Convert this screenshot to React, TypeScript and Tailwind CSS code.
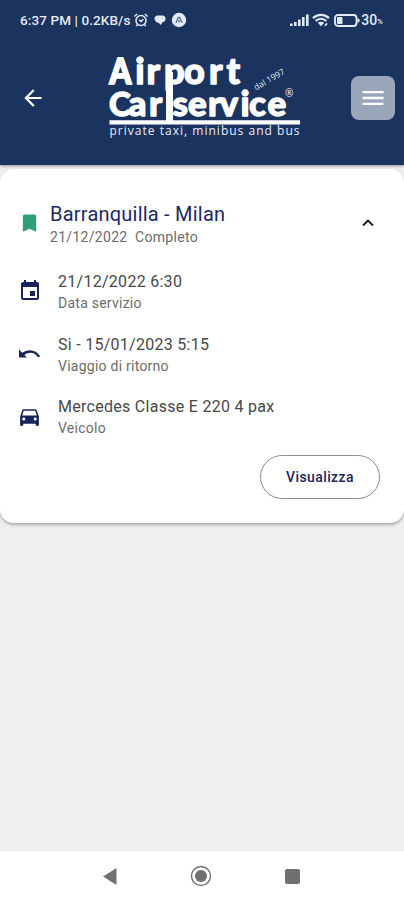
import type { ReactNode } from "react"
import { MdArrowBack, MdBookmark, MdDirectionsCar, MdEvent, MdMenu } from "react-icons/md"

interface DetailRowProps {
  icon: ReactNode
  value: string
  label: string
}

function AlarmIcon() {
  return (
    <svg viewBox="0 0 16 16" className="h-4 w-4" fill="none" stroke="currentColor" strokeWidth="1.5">
      <circle cx="8" cy="8.5" r="5" />
      <path d="M1.4 4.5 4.2 2M14.6 4.5 11.8 2M4.5 12.5l-1.3 1.6M11.5 12.5l1.3 1.6M6 8l2 1.6 2.3-2.3" />
    </svg>
  )
}

function StatusBar() {
  return (
    <div className="flex h-10 items-center pr-[21px] pl-5 text-[#e4eaf5]">
      <span className="w-[113px] text-[13.5px] font-medium tracking-[0.1px] whitespace-nowrap">6:37 PM | 0.2KB/s</span>
      <AlarmIcon />
      {/* chat bubble */}
      <svg viewBox="0 0 12 12" className="ml-[5px] h-3 w-3" fill="currentColor">
        <path d="M3.5 1.5h5A3 3 0 0 1 11.5 5c0 1.8-1.2 3-3 3.2L6.8 11 5.5 9.5C2.3 8.6.5 6.5.5 4.8.5 3 1.8 1.5 3.5 1.5Z" />
      </svg>
      <svg viewBox="0 0 16 16" className="ml-[5px] h-4 w-4">
        <circle cx="8" cy="8" r="7.2" fill="currentColor" />
        <path d="M5 10.8 7.3 5.5h1.4l2.3 5.3M8 8v2.8" fill="none" stroke="#5a6c93" strokeWidth="1.3" />
      </svg>
      <div className="ml-auto flex items-center">
        <svg viewBox="0 0 19 12" className="h-3 w-[19px]" fill="currentColor">
          <path d="M0 9.5h2.6V12H0zM4 8h2.6v4H4zM8 5.5h2.6V12H8zM12 3h2.6v9H12zM16 .5h2.6V12H16z" />
        </svg>
        <svg viewBox="0 0 18 14" className="ml-[3px] h-[14px] w-[18px]" fill="none" stroke="currentColor">
          <path d="M1 5.2C5.5.8 12.5.8 17 5.2" strokeWidth="2.4" />
          <path d="M3.7 8c3-3 7.6-3 10.6 0" strokeWidth="2.2" />
          <path d="m5.8 9.8 3.2 3.5 3.2-3.5c-2-1.5-4.4-1.5-6.4 0Z" fill="currentColor" stroke="none" />
          <path d="m12.8 12.8 2.4-2.4" strokeWidth="1.6" />
        </svg>
        <svg viewBox="0 0 27 13" className="ml-[4px] h-[13px] w-[27px]">
          <rect x="1" y="1" width="21.5" height="11" rx="3" fill="none" stroke="currentColor" strokeWidth="1.9" />
          <rect x="3" y="3" width="5.5" height="7" rx="1" fill="currentColor" />
          <path d="M23.5 3.500v6l2.700-3z" fill="currentColor" />
        </svg>
        <span className="text-[14px] font-medium">30</span>
        <span className="mt-[3px] text-[8px] font-medium">%</span>
      </div>
    </div>
  )
}

function Logo() {
  return (
    <svg viewBox="0 0 210 100" className="h-[100px] w-[210px]" fill="#fff" stroke="#fff">
      <g fontFamily="Lato, sans-serif" fontWeight="900" fontSize="36" strokeWidth="1.3" strokeLinejoin="round">
        <text transform="translate(9.5 39) scale(.86 1)" strokeWidth="2">A</text>
        <text x="35.200 46.500 64 84 109 126.500" y="39">irport</text>
        <text y="70.500" fontSize="35">
          <tspan x="9" fontSize="33">C</tspan>
          <tspan x="28.500 49">ar</tspan>
          <tspan x="72.500 88 108 119.500 140.500 149 167.500">service</tspan>
        </text>
      </g>
      {/* the long stem of the "p" reaches the rule */}
      <path d="M66 27h7v50h-7zM9.500 75.300H200v4.200H9.500z" stroke="none" />
      <text x="9.500" y="90" fontFamily="Open Sans, sans-serif" fontSize="12" fontWeight="500" textLength="190" stroke="none" fill="#e8edf6">
        private taxi, minibus and bus
      </text>
      <text x="156" y="45.500" fontFamily="Open Sans, sans-serif" fontSize="8.500" textLength="34" transform="rotate(-30 156 45.5)" stroke="none" fill="#dce3ef">
        dal 1997
      </text>
      <text x="185" y="51.500" fontFamily="Open Sans, sans-serif" fontSize="10" stroke="none">®</text>
    </svg>
  )
}

function DetailRow({ icon, value, label }: DetailRowProps) {
  return (
    <div className="flex h-[62.500px] items-start">
      <div className="flex h-11 w-[39px] items-center text-[#17245c]">{icon}</div>
      <div>
        <p className="pt-px text-base leading-6 tracking-[0.28px] text-[#484848]">{value}</p>
        <p className="text-sm leading-[18px] tracking-[0.25px] text-[#6c6c6c]">{label}</p>
      </div>
    </div>
  )
}

function BookingCard() {
  return (
    <section className="h-[354px] rounded-[14px] bg-white pt-8 pr-6 pl-[19px] shadow-[0_2px_3px_rgba(0,0,0,0.28)]">
      <div className="flex h-[68px] items-start">
        <MdBookmark className="mt-[10px] mr-[9px] -ml-[1px] h-6 w-[23px] text-[#2e9f78]" />
        <div className="pt-px">
          <h1 className="text-xl leading-6 tracking-[0.22px] text-[#1d2861]">Barranquilla - Milan</h1>
          <p className="text-sm leading-[22px] tracking-[0.3px] whitespace-pre text-[#6c6c6c]">21/12/2022  Completo</p>
        </div>
        <svg viewBox="0 0 12 8" className="mt-[18px] mr-[6px] ml-auto h-2 w-3" fill="none" stroke="#171717" strokeWidth="1.8">
          <path d="m1 6.500 5-5 5 5" />
        </svg>
      </div>

      <DetailRow icon={<MdEvent className="-ml-[1px] h-6 w-6" />} value="21/12/2022 6:30" label="Data servizio" />
      <DetailRow
        icon={
          <svg viewBox="0 0 22 12" className="h-3 w-[22px]" fill="currentColor">
            <path d="M0 1.500v8h8L5.300 7C10 3.700 15.500 4 19 9.300l2.300-.9C17 1.500 9.500.4 3.200 4.700Z" />
          </svg>
        }
        value="Si - 15/01/2023 5:15"
        label="Viaggio di ritorno"
      />
      <DetailRow
        icon={<MdDirectionsCar className="-ml-[2px] h-[25px] w-[25px]" />}
        value="Mercedes Classe E 220 4 pax"
        label="Veicolo"
      />

      <button className="-mt-[2px] ml-auto flex h-11 w-[120px] items-center justify-center rounded-full border border-[#8d8d8d] text-sm font-medium tracking-[0.4px] text-[#222759]">
        Visualizza
      </button>
    </section>
  )
}

function NavigationBar() {
  return (
    <nav className="flex h-[49px] items-center bg-white pt-px pr-[104px] pl-[103px] text-[#707070]">
      <svg viewBox="0 0 14 17" className="h-[17px] w-[14px]" fill="currentColor">
        <path d="M0 8.500 13.500 0v17z" />
      </svg>
      <svg viewBox="0 0 22 22" className="mx-auto h-[22px] w-[22px]">
        <circle cx="11" cy="11" r="9.500" fill="none" stroke="currentColor" strokeWidth="1.400" />
        <circle cx="11" cy="11" r="6" fill="currentColor" />
      </svg>
      <div className="h-[15px] w-[15px] rounded-[2px] bg-[#707070]" />
    </nav>
  )
}

export default function App() {
  return (
    <div className="flex h-[900px] w-full flex-col overflow-hidden bg-[#efefef] font-[Roboto,sans-serif]">
      <header className="h-[165px] bg-[#1a335f] shadow-[0_1px_3px_rgba(0,0,0,0.4)]">
        <StatusBar />
        <div className="flex h-[115px] items-center pr-[9px] pl-[20px]">
          <MdArrowBack className="h-[26px] w-[26px] text-white" />
          <div className="mt-[-5px] ml-[54px]">
            <Logo />
          </div>
          <button className="ml-auto flex h-[44px] w-[44px] items-center justify-center rounded-[8px] bg-[#99a5b8] text-white">
            <MdMenu className="h-7 w-7" />
          </button>
        </div>
      </header>
      <main className="flex-1 pt-1">
        <BookingCard />
      </main>
      <NavigationBar />
    </div>
  )
}
